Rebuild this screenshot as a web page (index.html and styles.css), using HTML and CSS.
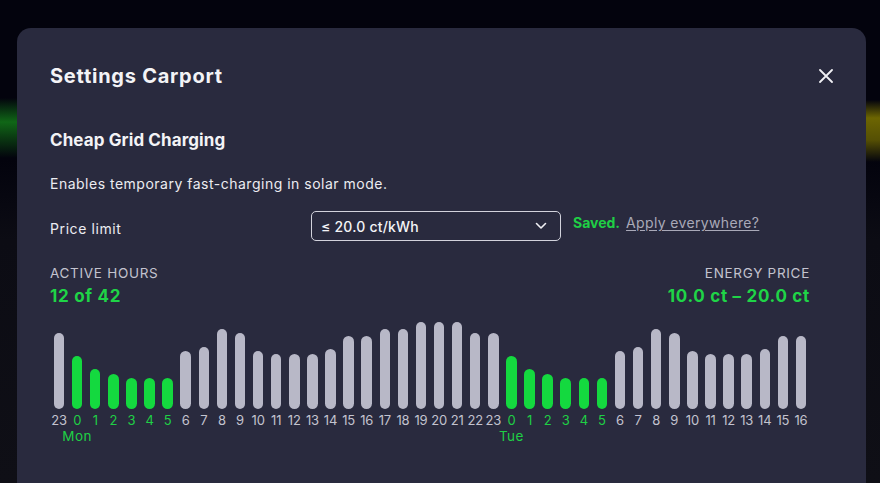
FILE: index.html
```html
<!DOCTYPE html>
<html lang="en">
<head>
<meta charset="utf-8">
<title>Settings Carport</title>
<link rel="stylesheet" href="styles.css">
</head>
<body>
<div class="modal">
  <div class="modal-header">
    <h1 class="modal-title">Settings Carport</h1>
    <button class="close-btn" aria-label="Close">
      <svg width="14" height="14" viewBox="0 0 14 14"><path d="M1 1 L13 13 M13 1 L1 13" stroke="#f0f0f4" stroke-width="1.8" stroke-linecap="round" fill="none"/></svg>
    </button>
  </div>
  <div class="modal-body">
    <h2 class="section-title">Cheap Grid Charging</h2>
    <p class="section-desc">Enables temporary fast-charging in solar mode.</p>
    <div class="price-row">
      <span class="price-label">Price limit</span>
      <div class="select">
        <span>≤ 20.0 ct/kWh</span>
        <svg width="12" height="8" viewBox="0 0 12 8"><path d="M1.5 1.5 L6 6 L10.5 1.5" stroke="#f0f0f4" stroke-width="1.6" stroke-linecap="round" stroke-linejoin="round" fill="none"/></svg>
      </div>
      <span class="saved">Saved.</span>
      <a class="apply" href="#">Apply everywhere?</a>
    </div>
    <div class="stats">
      <div class="stat">
        <div class="stat-label">ACTIVE HOURS</div>
        <div class="stat-value">12 of 42</div>
      </div>
      <div class="stat stat-right">
        <div class="stat-label">ENERGY PRICE</div>
        <div class="stat-value">10.0 ct – 20.0 ct</div>
      </div>
    </div>
    <div class="chart">
      <div class="col"><div class="bar-wrap"><div class="bar" style="height:76px"></div></div><span class="hour">23</span></div>
      <div class="col on"><div class="bar-wrap"><div class="bar" style="height:53px"></div></div><span class="hour">0</span><span class="day">Mon</span></div>
      <div class="col on"><div class="bar-wrap"><div class="bar" style="height:40px"></div></div><span class="hour">1</span></div>
      <div class="col on"><div class="bar-wrap"><div class="bar" style="height:35px"></div></div><span class="hour">2</span></div>
      <div class="col on"><div class="bar-wrap"><div class="bar" style="height:31px"></div></div><span class="hour">3</span></div>
      <div class="col on"><div class="bar-wrap"><div class="bar" style="height:31px"></div></div><span class="hour">4</span></div>
      <div class="col on"><div class="bar-wrap"><div class="bar" style="height:31px"></div></div><span class="hour">5</span></div>
      <div class="col"><div class="bar-wrap"><div class="bar" style="height:58px"></div></div><span class="hour">6</span></div>
      <div class="col"><div class="bar-wrap"><div class="bar" style="height:62px"></div></div><span class="hour">7</span></div>
      <div class="col"><div class="bar-wrap"><div class="bar" style="height:80px"></div></div><span class="hour">8</span></div>
      <div class="col"><div class="bar-wrap"><div class="bar" style="height:76px"></div></div><span class="hour">9</span></div>
      <div class="col"><div class="bar-wrap"><div class="bar" style="height:58px"></div></div><span class="hour">10</span></div>
      <div class="col"><div class="bar-wrap"><div class="bar" style="height:55px"></div></div><span class="hour">11</span></div>
      <div class="col"><div class="bar-wrap"><div class="bar" style="height:55px"></div></div><span class="hour">12</span></div>
      <div class="col"><div class="bar-wrap"><div class="bar" style="height:55px"></div></div><span class="hour">13</span></div>
      <div class="col"><div class="bar-wrap"><div class="bar" style="height:60px"></div></div><span class="hour">14</span></div>
      <div class="col"><div class="bar-wrap"><div class="bar" style="height:73px"></div></div><span class="hour">15</span></div>
      <div class="col"><div class="bar-wrap"><div class="bar" style="height:73px"></div></div><span class="hour">16</span></div>
      <div class="col"><div class="bar-wrap"><div class="bar" style="height:80px"></div></div><span class="hour">17</span></div>
      <div class="col"><div class="bar-wrap"><div class="bar" style="height:80px"></div></div><span class="hour">18</span></div>
      <div class="col"><div class="bar-wrap"><div class="bar" style="height:87px"></div></div><span class="hour">19</span></div>
      <div class="col"><div class="bar-wrap"><div class="bar" style="height:87px"></div></div><span class="hour">20</span></div>
      <div class="col"><div class="bar-wrap"><div class="bar" style="height:87px"></div></div><span class="hour">21</span></div>
      <div class="col"><div class="bar-wrap"><div class="bar" style="height:76px"></div></div><span class="hour">22</span></div>
      <div class="col"><div class="bar-wrap"><div class="bar" style="height:76px"></div></div><span class="hour">23</span></div>
      <div class="col on"><div class="bar-wrap"><div class="bar" style="height:53px"></div></div><span class="hour">0</span><span class="day">Tue</span></div>
      <div class="col on"><div class="bar-wrap"><div class="bar" style="height:40px"></div></div><span class="hour">1</span></div>
      <div class="col on"><div class="bar-wrap"><div class="bar" style="height:35px"></div></div><span class="hour">2</span></div>
      <div class="col on"><div class="bar-wrap"><div class="bar" style="height:31px"></div></div><span class="hour">3</span></div>
      <div class="col on"><div class="bar-wrap"><div class="bar" style="height:31px"></div></div><span class="hour">4</span></div>
      <div class="col on"><div class="bar-wrap"><div class="bar" style="height:31px"></div></div><span class="hour">5</span></div>
      <div class="col"><div class="bar-wrap"><div class="bar" style="height:58px"></div></div><span class="hour">6</span></div>
      <div class="col"><div class="bar-wrap"><div class="bar" style="height:62px"></div></div><span class="hour">7</span></div>
      <div class="col"><div class="bar-wrap"><div class="bar" style="height:80px"></div></div><span class="hour">8</span></div>
      <div class="col"><div class="bar-wrap"><div class="bar" style="height:76px"></div></div><span class="hour">9</span></div>
      <div class="col"><div class="bar-wrap"><div class="bar" style="height:58px"></div></div><span class="hour">10</span></div>
      <div class="col"><div class="bar-wrap"><div class="bar" style="height:55px"></div></div><span class="hour">11</span></div>
      <div class="col"><div class="bar-wrap"><div class="bar" style="height:55px"></div></div><span class="hour">12</span></div>
      <div class="col"><div class="bar-wrap"><div class="bar" style="height:55px"></div></div><span class="hour">13</span></div>
      <div class="col"><div class="bar-wrap"><div class="bar" style="height:60px"></div></div><span class="hour">14</span></div>
      <div class="col"><div class="bar-wrap"><div class="bar" style="height:73px"></div></div><span class="hour">15</span></div>
      <div class="col"><div class="bar-wrap"><div class="bar" style="height:73px"></div></div><span class="hour">16</span></div>
    </div>
  </div>
</div>
</body>
</html>
```
FILE: styles.css
```css
* { box-sizing: border-box; }
html, body { margin: 0; padding: 0; }
body {
  width: 880px;
  height: 483px;
  overflow: hidden;
  font-family: "Inter", "Open Sans", sans-serif;
  color: #ececf1;
  background-color: #0e0e15;
  background-image:
    linear-gradient(to bottom, rgba(18, 110, 22, 0) 98px, rgba(18, 120, 24, 0.85) 122px, rgba(18, 110, 22, 0.5) 138px, rgba(18, 110, 22, 0) 158px),
    linear-gradient(to bottom, rgba(120, 112, 0, 0) 100px, rgba(120, 112, 0, 0.9) 118px, rgba(120, 112, 0, 0.7) 140px, rgba(120, 112, 0, 0) 162px),
    linear-gradient(to bottom, #03030d 0, #03030d 160px, #0c0c14 240px, #0f0f16 100%);
  background-size: 17px 100%, 14px 100%, 100% 100%;
  background-position: 0 0, 866px 0, 0 0;
  background-repeat: no-repeat;
}
.modal {
  margin: 28px 14px 0 17px;
  height: 480px;
  background: #292a3e;
  border-radius: 14px;
  padding: 32px 33px 0 33px;
}
.modal-header {
  display: flex;
  align-items: center;
  justify-content: space-between;
  height: 32px;
}
.modal-title {
  margin: 0;
  font-size: 20px;
  font-weight: 700;
  line-height: 32px;
  color: #f3f3f6;
  letter-spacing: 0.75px;
}
.close-btn {
  width: 14px;
  height: 14px;
  padding: 0;
  border: 0;
  background: none;
  display: flex;
  cursor: pointer;
}
.modal-body {
  width: 760px;
}
.section-title {
  margin: 36px 0 0;
  font-size: 17px;
  font-weight: 700;
  line-height: 24px;
  color: #f3f3f6;
  letter-spacing: 0.1px;
}
.section-desc {
  margin: 22px 0 0;
  font-size: 14px;
  line-height: 20px;
  color: #ececf1;
  letter-spacing: 0.5px;
}
.price-row {
  margin-top: 17px;
  display: flex;
  align-items: center;
  height: 30px;
}
.price-label {
  width: 261px;
  font-size: 14px;
  line-height: 20px;
  padding-top: 5px;
  letter-spacing: 0.6px;
}
.select {
  width: 250px;
  height: 30px;
  border: 1.5px solid #d2d2dc;
  border-radius: 5px;
  display: flex;
  align-items: center;
  justify-content: space-between;
  padding: 0 13px 0 9px;
  font-size: 14px;
  font-weight: 500;
  color: #f3f3f6;
  letter-spacing: 0.2px;
}
.saved {
  margin-left: 12px;
  font-size: 14px;
  font-weight: 700;
  color: #1fcf45;
  padding-bottom: 7px;
}
.apply {
  margin-left: 6px;
  font-size: 14px;
  color: #a9a9b8;
  text-decoration: underline;
  text-underline-offset: 2px;
  padding-bottom: 7px;
  letter-spacing: 0.35px;
}
.stats {
  margin-top: 23px;
  display: flex;
  justify-content: space-between;
}
.stat-right { text-align: right; }
.stat-label {
  font-size: 13.5px;
  line-height: 18px;
  color: #c3c3cf;
  letter-spacing: 0.7px;
}
.stat-value {
  margin-top: 2px;
  font-size: 17px;
  font-weight: 700;
  line-height: 24px;
  color: #1fd447;
  letter-spacing: 0.7px;
}
.chart {
  margin-top: 13px;
  display: grid;
  grid-template-columns: repeat(42, minmax(0, 1fr));
}
.col {
  display: flex;
  flex-direction: column;
  align-items: center;
  min-width: 0;
  overflow: visible;
}
.bar-wrap {
  height: 88px;
  display: flex;
  align-items: flex-end;
}
.bar {
  width: 10.5px;
  border-radius: 6px;
  background: #b8b8c7;
}
.col.on .bar { background: #14d93f; }
.hour {
  margin-top: 3px;
  font-size: 13px;
  line-height: 16px;
  color: #c3c3cf;
  white-space: nowrap;
  letter-spacing: -0.2px;
}
.col.on .hour { color: #1fcf45; }
.day {
  font-size: 13.5px;
  line-height: 16px;
  color: #1fcf45;
  white-space: nowrap;
  letter-spacing: 0.5px;
}
```
